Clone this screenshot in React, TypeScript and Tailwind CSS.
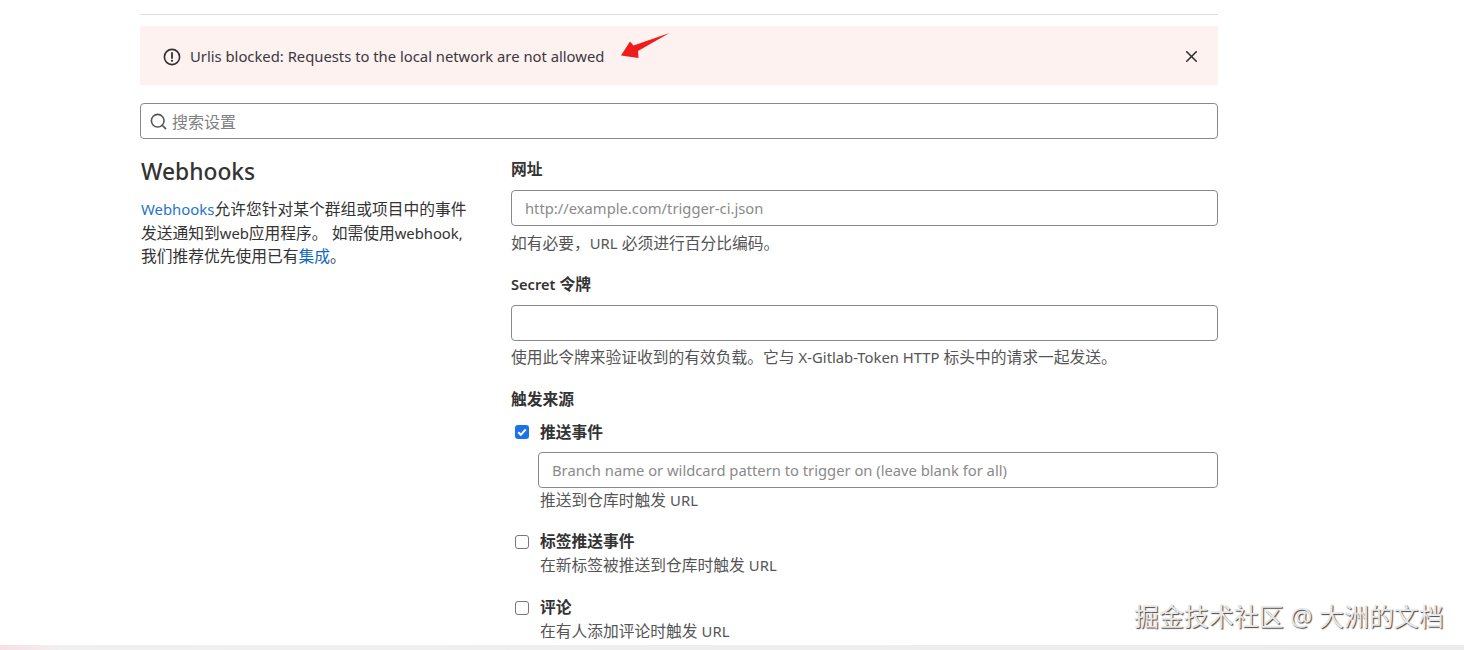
import React from 'react';
import { X, Search } from 'lucide-react';

const font = { fontFamily: '"Noto Sans", "Noto Sans CJK SC", sans-serif' };

// latin runs are set a bit smaller than the CJK around them
function L({ children }: { children: React.ReactNode }) {
  return <span className="text-[14.8px]">{children}</span>;
}

function Hint({ children }: { children: React.ReactNode }) {
  return <p className="text-[15.75px] leading-[20px] text-[#555]">{children}</p>;
}

function Label({ children }: { children: React.ReactNode }) {
  return <label className="block text-[15.75px] leading-[20px] font-semibold text-[#333]">{children}</label>;
}

function TextBox({ placeholder }: { placeholder?: string }) {
  return (
    <input
      readOnly
      placeholder={placeholder}
      className="block w-full h-[36px] rounded-[4px] border border-[#89888d] bg-white px-[13px] text-[14.75px] placeholder:text-[#8a8a8a] outline-none"
    />
  );
}

function TriggerRow({ label, hint }: { label: string; hint: string }) {
  return (
    <div className="flex">
      <span className="mt-[4px] ml-[4px] h-[14px] w-[14px] rounded-[3px] border border-[#77767b] bg-white" />
      <div className="ml-[11px]">
        <div className="text-[15.75px] leading-[20px] font-semibold text-[#333]">{label}</div>
        <div className="mt-[4px]">
          <Hint>{hint} <L>URL</L></Hint>
        </div>
      </div>
    </div>
  );
}

export default function App() {
  return (
    <div className="relative h-[650px] w-[1464px] overflow-hidden bg-white" style={font}>
      <div className="ml-[140px] w-[1078px] pt-[14px]">
        <div className="h-px bg-[#dcdcde]" />

        <div className="mt-[11px] flex h-[59px] items-center bg-[#fdf2ef] pl-[23px] pr-[17px] text-[#3a383f]">
          <svg width="18" height="18" viewBox="0 0 18 18" fill="none" className="mt-[2px]">
            <circle cx="9" cy="9" r="7.6" stroke="#303030" strokeWidth="1.6" />
            <path d="M9 4.8v5.2" stroke="#303030" strokeWidth="1.8" strokeLinecap="round" />
            <circle cx="9" cy="12.8" r="1.1" fill="#303030" />
          </svg>
          <span className="ml-[9px] mt-[2px] text-[14.8px]">Urlis blocked: Requests to the local network are not allowed</span>
          <X size={19} strokeWidth={2} className="ml-auto mt-[2px] text-[#303030]" />
        </div>

        <div className="mt-[18px] flex h-[36px] items-center rounded-[4px] border border-[#89888d] pl-[8px]">
          <Search size={19} strokeWidth={2} className="text-[#555]" />
          <span className="ml-[4px] mt-[1px] text-[16px] text-[#808080]">搜索设置</span>
        </div>

        <div className="mt-[18px] flex">
          <div className="w-[371px] shrink-0 pl-px">
            <h2 className="text-[22.8px] leading-[30px] font-medium text-[#333]">Webhooks</h2>
            <p className="mt-[11px] w-[329px] text-[15.75px] leading-[23.5px] text-[#333]">
              <span className="text-[14.9px] text-[#1f75cb]">Webhooks</span>允许您针对某个群组或项目中的事件发送通知到<L>web</L>应用程序。 如需使用<L>webhook,</L> 我们推荐优先使用已有<span className="text-[#1068bf]">集成</span>。
            </p>
          </div>

          <div className="min-w-0 flex-1">
            <div className="mt-[2px]"><Label>网址</Label></div>
            <div className="mt-[11px]"><TextBox placeholder="http://example.com/trigger-ci.json" /></div>
            <div className="mt-[7px]"><Hint>如有必要，<L>URL</L> 必须进行百分比编码。</Hint></div>

            <div className="mt-[21px]"><Label><span className="text-[14.6px]">Secret</span> 令牌</Label></div>
            <div className="mt-[11px]"><TextBox /></div>
            <div className="mt-[6px]"><Hint>使用此令牌来验证收到的有效负载。它与 <L>X-Gitlab-Token HTTP</L> 标头中的请求一起发送。</Hint></div>

            <div className="mt-[22px]"><Label>触发来源</Label></div>

            <div className="mt-[13px] flex">
              <span className="ml-[4px] mt-[3px] flex h-[14px] w-[14px] items-center justify-center rounded-[3px] bg-[#1a73e8]">
                <svg width="12" height="12" viewBox="0 0 12 12" fill="none">
                  <path d="M2.2 6.2l2.6 2.6 5-5.4" stroke="#fff" strokeWidth="2" />
                </svg>
              </span>
              <span className="ml-[11px] text-[15.75px] leading-[20px] font-semibold text-[#333]">推送事件</span>
            </div>
            <div className="ml-[27px] mt-[10px]">
              <TextBox placeholder="Branch name or wildcard pattern to trigger on (leave blank for all)" />
              <div className="mt-[2px] ml-[2px]"><Hint>推送到仓库时触发 <L>URL</L></Hint></div>
            </div>

            <div className="mt-[21px]"><TriggerRow label="标签推送事件" hint="在新标签被推送到仓库时触发" /></div>
            <div className="mt-[22px]"><TriggerRow label="评论" hint="在有人添加评论时触发" /></div>
          </div>
        </div>
      </div>

      {/* red annotation arrow drawn over the alert */}
      <svg className="absolute left-[620px] top-[32px]" width="51" height="27" viewBox="620 32 51 27">
        <polygon points="621,55.5 630,41.5 633.5,45.5 669.5,33 638,51 638.5,58" fill="#f01c1c" />
      </svg>

      {/* watermark + the strip of the next window at the bottom edge */}
      <div className="absolute left-[1134px] top-[601px] whitespace-nowrap text-[24.95px] leading-[30px] text-[#e8e8e8] [text-shadow:1px_1px_1px_#444]">
        掘金技术社区 @ 大洲的文档
      </div>
      <div className="absolute inset-x-0 bottom-0 h-[5px] bg-gradient-to-r from-[#f8dfe3] from-0% via-[#f0f0f0] via-[4%] to-[#ececec]" />
    </div>
  );
}
